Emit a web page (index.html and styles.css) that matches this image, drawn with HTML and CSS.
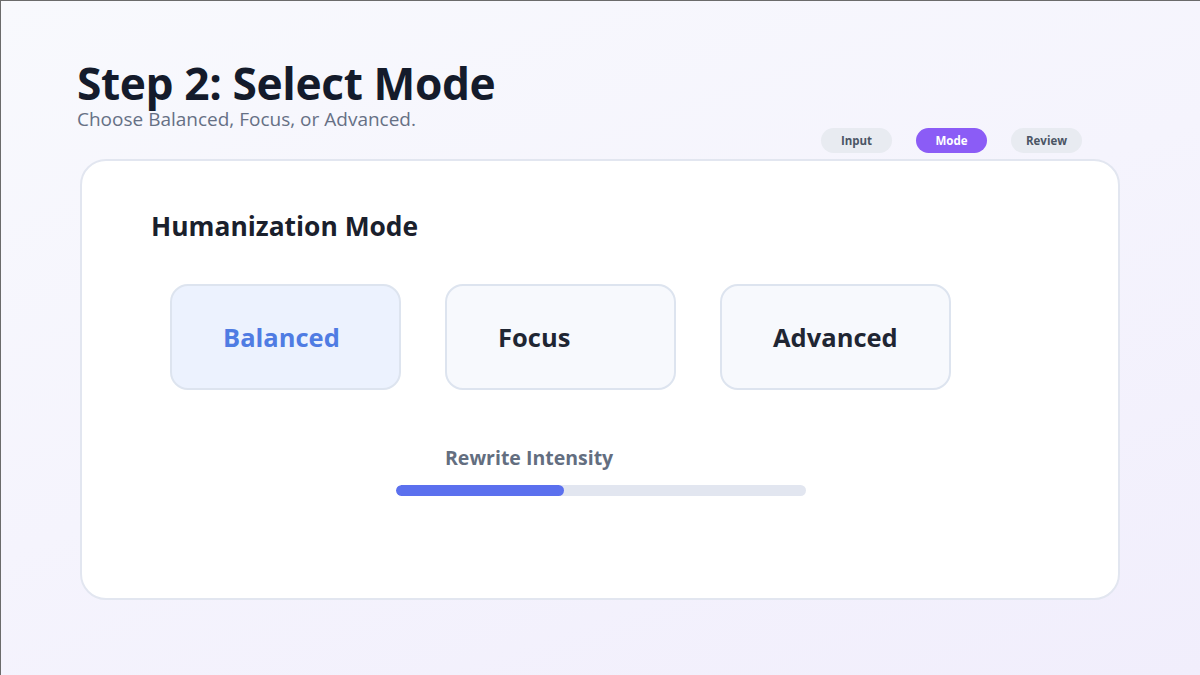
FILE: index.html
```html
<!DOCTYPE html>
<html lang="en">

<head>
  <meta charset="UTF-8">
  <title>Step 2: Select Mode</title>
  <link rel="stylesheet" href="styles.css">
</head>

<body>
  <div class="page">
    <header class="head">
      <h1>Step 2: Select Mode</h1>
      <p>Choose Balanced, Focus, or Advanced.</p>
    </header>

    <!-- Шаги -->
    <nav class="steps">
      <span class="step">Input</span>
      <span class="step active">Mode</span>
      <span class="step">Review</span>
    </nav>

    <section class="card">
      <h2>Humanization Mode</h2>

      <div class="modes">
        <div class="mode selected">Balanced</div>
        <div class="mode">Focus</div>
        <div class="mode">Advanced</div>
      </div>

      <div class="intensity">
        <div class="intensity-label">Rewrite Intensity</div>
        <div class="track">
          <div class="fill" style="width: 41%"></div>
        </div>
      </div>
    </section>
  </div>
</body>

</html>
```

FILE: styles.css
```css
/* Общие стили */
html,
body {
  margin: 0;
  height: 100%;
}

body {
  font-family: 'Open Sans', 'Noto Sans', sans-serif;
  color: #1a202c;
  background: linear-gradient(160deg, #f8f9fd 0%, #f5f4fd 50%, #f1eefc 100%);
  border-top: 1px solid #6b6b6b;
  border-left: 1px solid #6b6b6b;
  box-sizing: border-box;
  overflow: hidden;
}

.page {
  padding: 0 80px 0 79px;
}

/* Заголовок */
.head {
  padding-top: 59px;
}

.head h1 {
  margin: 0 0 0 -3px;
  font-size: 44.3px;
  line-height: 46px;
  font-weight: 700;
  color: #141b2b;
  letter-spacing: -0.4px;
}

.head p {
  margin: 2px 0 0 -3px;
  font-size: 19px;
  line-height: 22px;
  color: #667085;
}

/* Шаги */
.steps {
  display: flex;
  justify-content: flex-end;
  gap: 24px;
  padding-right: 38px;
  margin-top: -2px;
}

.step {
  width: 71px;
  height: 25px;
  line-height: 25px;
  border-radius: 13px;
  text-align: center;
  font-size: 11.5px;
  font-weight: 700;
  background: #e8ebf1;
  color: #4b5565;
}

.step.active {
  background: #8b5cf6;
  color: #fff;
}

/* Карточка */
.card {
  margin-top: 6px;
  height: 441px;
  box-sizing: border-box;
  background: #fff;
  border: 2px solid #e2e6f0;
  border-radius: 26px;
  padding: 48px 0 0 69px;
}

.card h2 {
  margin: 0;
  font-size: 26.4px;
  line-height: 34px;
  font-weight: 700;
  color: #1a202c;
}

.modes {
  display: flex;
  gap: 44px;
  margin: 41px 0 0 19px;
}

.mode {
  width: 231px;
  height: 106px;
  box-sizing: border-box;
  border: 2px solid #dde4ef;
  border-radius: 18px;
  background: #f7f9fd;
  padding-left: 51px;
  display: flex;
  align-items: center;
  font-size: 25.5px;
  font-weight: 700;
  color: #1f2633;
}

.mode.selected {
  background: #ecf2fe;
  color: #4f7ce3;
}

/* Интенсивность */
.intensity {
  width: 410px;
  margin: 55px 0 0 245px;
}

.intensity-label {
  padding-left: 49px;
  font-size: 19.5px;
  line-height: 26px;
  font-weight: 700;
  color: #636e80;
}

.track {
  margin-top: 14px;
  height: 11px;
  border-radius: 6px;
  background: #e2e6f0;
  overflow: hidden;
}

.fill {
  height: 100%;
  border-radius: 6px;
  background: #5b70ee;
}
```
